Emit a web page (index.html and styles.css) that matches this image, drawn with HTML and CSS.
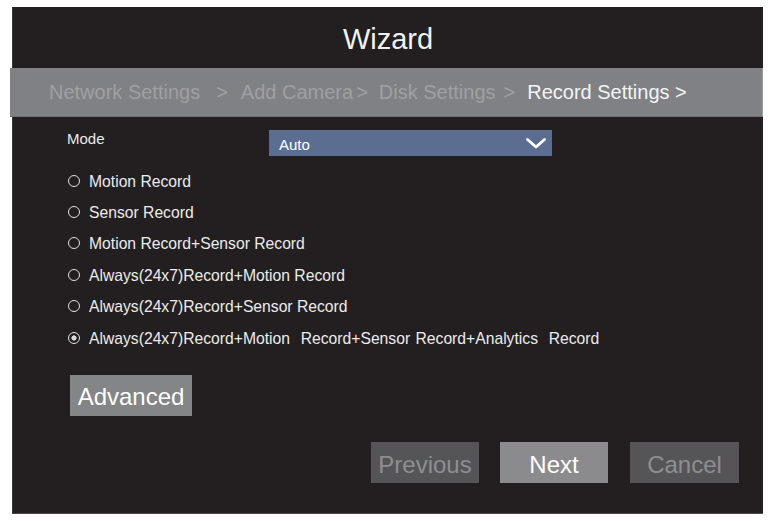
FILE: index.html
```html
<!DOCTYPE html>
<html>
<head>
<meta charset="utf-8">
<link rel="stylesheet" href="styles.css">
</head>
<body>
<div class="panel">
  <div class="title">Wizard</div>
  <div class="steps">
    <span class="step s1">Network Settings</span>
    <span class="sep p1">&gt;</span>
    <span class="step s2">Add Camera</span>
    <span class="sep p2">&gt;</span>
    <span class="step s3">Disk Settings</span>
    <span class="sep p3">&gt;</span>
    <span class="step current s4">Record Settings &gt;</span>
  </div>
  <div class="content">
    <div class="mode-row">
      <span class="mode-label">Mode</span>
      <div class="select">
        <span>Auto</span>
        <svg class="chev" width="20" height="11" viewBox="0 0 20 11"><path d="M1.5 1.5 L10 9 L18.5 1.5" fill="none" stroke="#ffffff" stroke-width="2.8" stroke-linecap="round" stroke-linejoin="round"/></svg>
      </div>
    </div>
    <div class="options">
      <div class="opt"><span class="radio"></span><span>Motion Record</span></div>
      <div class="opt"><span class="radio"></span><span>Sensor Record</span></div>
      <div class="opt"><span class="radio"></span><span>Motion Record+Sensor Record</span></div>
      <div class="opt"><span class="radio"></span><span>Always(24x7)Record+Motion Record</span></div>
      <div class="opt"><span class="radio"></span><span>Always(24x7)Record+Sensor Record</span></div>
      <div class="opt"><span class="radio checked"></span><span class="pre">Always(24x7)Record+Motion  Record+Sensor Record+Analytics  Record</span></div>
    </div>
    <button class="btn advanced">Advanced</button>
  </div>
  <div class="actions">
    <button class="btn dim">Previous</button>
    <button class="btn next">Next</button>
    <button class="btn dim cancel">Cancel</button>
  </div>
</div>
</body>
</html>
```
FILE: styles.css
```css
html, body {
  margin: 0;
  padding: 0;
  background: #ffffff;
}
body {
  font-family: "Liberation Sans", Arial, sans-serif;
  width: 770px;
  height: 521px;
  overflow: hidden;
}
.panel {
  margin: 7px 0 0 12px;
  width: 751px;
  height: 507px;
  box-sizing: border-box;
  background: #231f20;
  border-left: 1px solid #3b3839;
  border-bottom: 1px solid #4a4748;
  display: flex;
  flex-direction: column;
}
.title {
  height: 61px;
  display: flex;
  align-items: center;
  justify-content: center;
  color: #f2f2f2;
  font-size: 29px;
  padding-top: 4px;
  box-sizing: border-box;
}
.steps {
  height: 49px;
  margin-left: -3px;
  width: 753px;
  box-sizing: border-box;
  background: #808184;
  border-right: 1px solid #9a9b9d;
  border-bottom: 1px solid #6e6f71;
  display: flex;
  align-items: center;
  font-size: 20px;
  color: #9fa0a2;
  padding-left: 39px;
  padding-top: 1px;
  white-space: nowrap;
}
.p1 { margin-left: 16px; }
.s2 { margin-left: 13px; }
.p2 { margin-left: 3px; }
.s3 { margin-left: 11px; }
.p3 { margin-left: 8px; }
.s4 { margin-left: 12px; }
.current { color: #f4f4f4; }
.content {
  padding-left: 54px;
  display: flex;
  flex-direction: column;
  align-items: flex-start;
}
.mode-row {
  margin-top: 13px;
  height: 26px;
  display: flex;
  align-items: flex-start;
}
.mode-label {
  width: 202px;
  color: #eaeaea;
  font-size: 15px;
  line-height: 18px;
}
.select {
  width: 283px;
  height: 26px;
  box-sizing: border-box;
  background: #5b6e92;
  display: flex;
  align-items: center;
  justify-content: space-between;
  padding: 2px 6px 0 10px;
  color: #ffffff;
  font-size: 15px;
}
.chev { margin-top: -2px; }
.options {
  margin-top: 10px;
  display: flex;
  flex-direction: column;
}
.opt {
  height: 31.4px;
  display: flex;
  align-items: center;
  color: #ececec;
  font-size: 15.7px;
  white-space: nowrap;
}
.pre { white-space: pre; word-spacing: 1px; }
.radio {
  width: 12px;
  height: 12px;
  box-sizing: border-box;
  border: 1.3px solid #e0e0e0;
  border-radius: 50%;
  margin: 0 9px 0 1px;
  position: relative;
  top: -1px;
}
.radio.checked {
  background: radial-gradient(circle, #d8d8d8 0 2.3px, transparent 2.9px);
}
.btn {
  border: none;
  font-family: "Liberation Sans", Arial, sans-serif;
  font-size: 24px;
  padding: 4px 0 0 0;
  height: 41px;
  width: 108px;
}
.advanced {
  margin: 21px 0 0 3px;
  width: 122px;
  background: #848587;
  color: #ffffff;
  padding-top: 3px;
}
.actions {
  margin-top: 26px;
  display: flex;
  justify-content: flex-end;
  gap: 21px;
  padding-right: 24px;
}
.dim {
  background: #555557;
  color: #8e8e90;
}
.next {
  background: #8b8b8d;
  color: #ffffff;
}
.cancel { width: 109px; margin-left: 1px; }
```
